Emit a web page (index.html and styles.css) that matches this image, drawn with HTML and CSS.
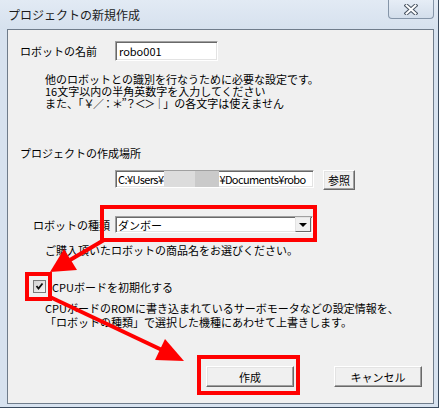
FILE: index.html
```html
<!DOCTYPE html>
<html lang="ja">
<head>
<meta charset="utf-8">
<title>プロジェクトの新規作成</title>
<link rel="stylesheet" href="styles.css">
</head>
<body>
<div class="window">
  <div class="titlebar">
    <span class="title">プロジェクトの新規作成</span>
    <div class="close">
      <svg width="14" height="11" viewBox="0 0 14 11">
        <path d="M2.5 1.5 L11.5 9.5 M11.5 1.5 L2.5 9.5" stroke="#4a5563" stroke-width="4" stroke-linecap="square" fill="none"/>
        <path d="M2.5 1.5 L11.5 9.5 M11.5 1.5 L2.5 9.5" stroke="#ffffff" stroke-width="2" stroke-linecap="square" fill="none"/>
      </svg>
    </div>
  </div>
  <div class="client">
    <div class="name-row">
      <span class="label label-name">ロボットの名前</span>
      <div class="field name-field">robo001</div>
    </div>
    <div class="desc">他のロボットとの識別を行なうために必要な設定です。<br>16文字以内の半角英数字を入力してください<br>また、「<span class="symbols">￥／：＊”？＜＞｜</span>」の各文字は使えません</div>
    <div class="section-label">プロジェクトの作成場所</div>
    <div class="path-row">
      <div class="field path-field"><span class="path-text">C:¥Users¥</span><span class="blur blur-a"></span><span class="blur blur-b"></span><span class="path-text">¥Documents¥robo</span></div>
      <div class="button browse">参照</div>
    </div>
    <div class="type-row">
      <span class="label label-type">ロボットの種類</span>
      <div class="field select">
        <span class="select-text">ダンボー</span>
        <div class="select-arrow"><span class="tri"></span></div>
      </div>
    </div>
    <div class="hint">ご購入頂いたロボットの商品名をお選びください。</div>
    <div class="check-row">
      <div class="checkbox">
        <svg width="11" height="11" viewBox="0 0 11 11"><path d="M2.5 5 L4.5 7.5 L8.5 2.5" stroke="#111" stroke-width="1.8" fill="none"/></svg>
      </div>
      <span class="check-label">CPUボードを初期化する</span>
    </div>
    <div class="cpu-desc">CPUボードのROMに書き込まれているサーボモータなどの設定情報を、<br>「ロボットの種類」で選択した機種にあわせて上書きします。</div>
    <div class="button-row">
      <div class="button action">作成</div>
      <div class="button action">キャンセル</div>
    </div>
  </div>
  <svg class="annotations" width="441" height="409" viewBox="0 0 441 409">
    <rect x="102" y="207" width="213" height="33" fill="none" stroke="#ff0000" stroke-width="4"/>
    <rect x="27" y="274" width="23" height="25" fill="none" stroke="#ff0000" stroke-width="4"/>
    <rect x="199" y="357" width="99" height="36" fill="none" stroke="#ff0000" stroke-width="4"/>
    <line x1="104" y1="240" x2="70" y2="260" stroke="#ff0000" stroke-width="4"/>
    <polygon points="50,272 77,270 64,249" fill="#ff0000"/>
    <line x1="50" y1="297" x2="162" y2="350" stroke="#ff0000" stroke-width="4"/>
    <polygon points="184,361 155,360 165,339" fill="#ff0000"/>
  </svg>
</div>
</body>
</html>
```
FILE: styles.css
```css
body {
  margin: 0;
  background: #ffffff;
  font-family: "Noto Sans CJK JP", sans-serif;
  color: #000;
}

.window {
  position: relative;
  width: 439px;
  height: 408px;
  box-sizing: border-box;
  background: #d7e2ef;
  border-right: 1px solid #3b4b5e;
  border-bottom: 1px solid #3b4b5e;
  border-top-left-radius: 2px;
}

.titlebar {
  height: 29px;
  display: flex;
  align-items: flex-start;
  background: linear-gradient(#e2eaf4, #d6e1ee);
}

.title {
  align-self: center;
  padding-left: 8px;
  font-size: 12px;
  line-height: 14px;
  color: #1b1b1b;
  white-space: nowrap;
}

.close {
  margin-left: auto;
  margin-right: 4px;
  width: 46px;
  height: 19px;
  box-sizing: border-box;
  border: 1px solid #8595a8;
  border-top: none;
  border-radius: 0 0 4px 4px;
  background: linear-gradient(#e6edf6, #d3deeb);
  display: flex;
  align-items: center;
  justify-content: center;
}

.client {
  margin-left: 7px;
  width: 427px;
  height: 375px;
  box-sizing: border-box;
  border: 1px solid #6f7c8b;
  background: #f0f0f0;
  font-size: 11px;
  line-height: 12px;
}

.label {
  white-space: nowrap;
}

.field {
  box-sizing: border-box;
  background: #fff;
  border: 1px solid;
  border-color: #a0a0a0 #ffffff #ffffff #a0a0a0;
  box-shadow: inset 1px 1px 0 #696969, inset -1px -1px 0 #e3e3e3;
  display: flex;
  align-items: center;
  overflow: hidden;
  white-space: nowrap;
}

.button {
  box-sizing: border-box;
  background: #f0f0f0;
  border: 1px solid;
  border-color: #ffffff #696969 #696969 #ffffff;
  box-shadow: inset -1px -1px 0 #a0a0a0, inset 1px 1px 0 #e3e3e3;
  display: flex;
  align-items: center;
  justify-content: center;
  white-space: nowrap;
}

/* row 1 */
.name-row {
  margin-top: 11px;
  height: 20px;
  display: flex;
  align-items: center;
  padding-left: 12px;
}
.label-name {
  width: 95px;
}
.name-field {
  width: 103px;
  height: 20px;
  padding-left: 3px;
}

.desc {
  margin-top: 12px;
  padding-left: 37px;
  line-height: 12px;
  white-space: nowrap;
}
.symbols {
  letter-spacing: -1.5px;
}

.section-label {
  margin-top: 38px;
  padding-left: 12px;
  line-height: 12px;
}

.path-row {
  margin-top: 11px;
  height: 20px;
  display: flex;
  align-items: flex-start;
  padding-left: 107px;
  gap: 9px;
}
.path-field {
  width: 199px;
  height: 18px;
  padding-left: 2px;
}
.path-text {
  letter-spacing: -0.6px;
}
.blur {
  display: inline-block;
  height: 16px;
  flex: none;
}
.blur-a {
  width: 31px;
  background: #dcdcdc;
  margin-left: 1px;
}
.blur-b {
  width: 24px;
  background: #cacaca;
}
.browse {
  width: 32px;
  height: 20px;
}

.type-row {
  margin-top: 26px;
  height: 17px;
  display: flex;
  align-items: center;
  padding-left: 25px;
}
.label-type {
  width: 82px;
}
.select {
  width: 198px;
  height: 17px;
  padding-left: 2px;
  padding-right: 1px;
}
.select-text {
  flex: 1;
}
.select-arrow {
  width: 16px;
  height: 15px;
  box-sizing: border-box;
  background: #f0f0f0;
  border: 1px solid;
  border-color: #e3e3e3 #696969 #696969 #e3e3e3;
  display: flex;
  align-items: center;
  justify-content: center;
}
.tri {
  width: 0;
  height: 0;
  border-left: 4px solid transparent;
  border-right: 4px solid transparent;
  border-top: 4px solid #000;
}

.hint {
  margin-top: 11px;
  padding-left: 37px;
  line-height: 12px;
}

.check-row {
  margin-top: 24px;
  height: 13px;
  display: flex;
  align-items: center;
  padding-left: 25px;
  gap: 6px;
}
.checkbox {
  width: 13px;
  height: 13px;
  box-sizing: border-box;
  border: 1px solid #7a7a7a;
  background: linear-gradient(135deg, #d2d2d2, #f6f6f6);
  display: flex;
  align-items: center;
  justify-content: center;
}
.check-label {
  white-space: nowrap;
}

.cpu-desc {
  margin-top: 8px;
  padding-left: 37px;
  line-height: 14px;
  white-space: nowrap;
}

.button-row {
  margin-top: 37px;
  display: flex;
  padding-left: 198px;
  gap: 40px;
}
.action {
  width: 88px;
  height: 21px;
}

.annotations {
  position: absolute;
  top: 0;
  left: 0;
  pointer-events: none;
}
```
